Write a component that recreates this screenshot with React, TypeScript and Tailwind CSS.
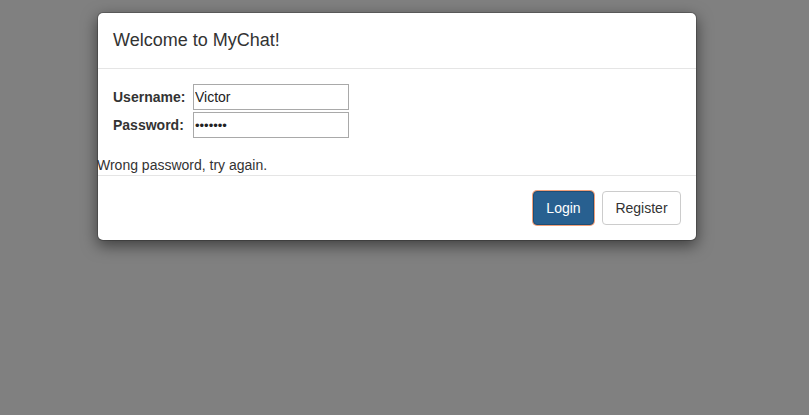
import React from "react";

const App = () => {
  return (
    <div className="min-h-[415px] w-full bg-[#808080] font-['Liberation_Sans',Arial,sans-serif] text-[14px] leading-[20px] text-[#333]">
      <div className="flex w-[794px] justify-center pt-[12px]">
        {/* Modal */}
        <div className="w-[600px] rounded-[6px] border border-[rgba(0,0,0,0.2)] bg-white bg-clip-padding shadow-[0_5px_15px_rgba(0,0,0,0.5)]">
          {/* Header */}
          <div className="border-b border-[#e5e5e5] p-[15px]">
            <h4 className="text-[18px] leading-[25px]">Welcome to MyChat!</h4>
          </div>

          {/* Body */}
          <div className="flex flex-col gap-[2px] p-[15px]">
            <div className="flex items-center">
              <label className="w-[80px] font-bold">Username:</label>
              <input
                type="text"
                defaultValue="Victor"
                className="h-[26px] w-[156px] border border-[#a9a9a9] px-[1px] text-[14px] text-[#222] outline-none"
              />
            </div>
            <div className="flex items-center">
              <label className="w-[80px] font-bold">Password:</label>
              <input
                type="password"
                defaultValue="1234567"
                className="h-[26px] w-[156px] border border-[#a9a9a9] px-[1px] text-[13px] text-[#222] outline-none"
              />
            </div>
          </div>

          {/* Error */}
          <div className="mt-[2px] ml-[-1px] h-[20px] leading-[20px]">Wrong password, try again.</div>

          {/* Footer */}
          <div className="flex justify-end gap-[8px] border-t border-[#e5e5e5] p-[15px]">
            <button className="h-[34px] w-[61px] rounded-[4px] border border-[#204d74] bg-[#286090] text-white ring-1 ring-[#f0a07a]">
              Login
            </button>
            <button className="h-[34px] w-[79px] rounded-[4px] border border-[#ccc] bg-white text-[#333]">
              Register
            </button>
          </div>
        </div>
      </div>
    </div>
  );
};

export default App;
